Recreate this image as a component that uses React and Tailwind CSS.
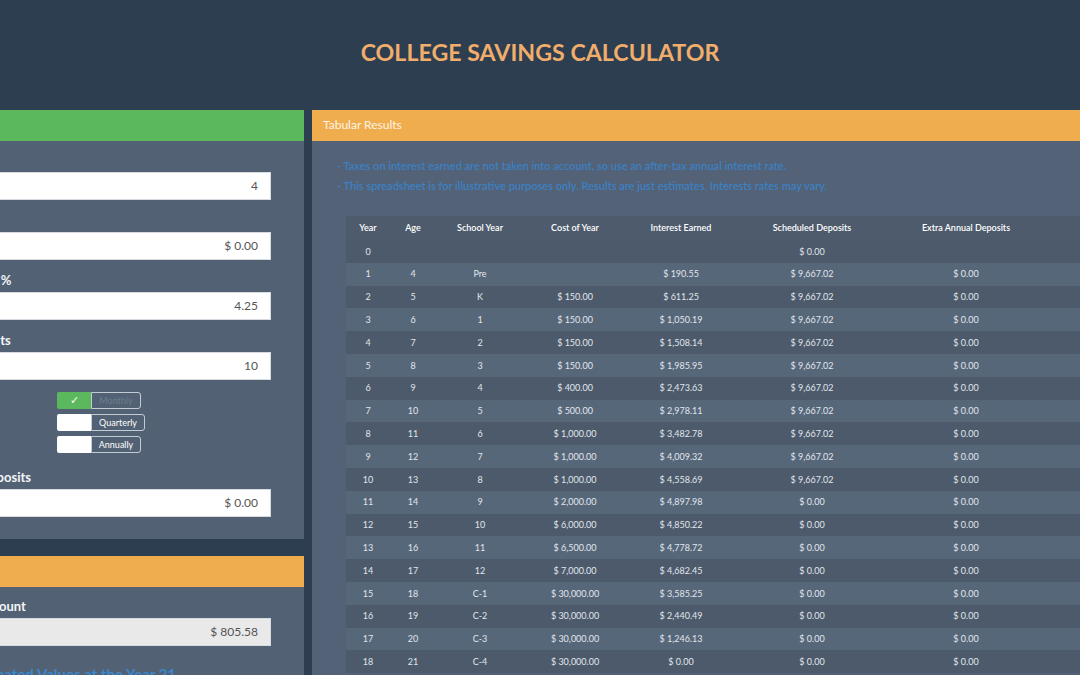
import React from "react";

const rows = [
  ["0", "", "", "", "", "$ 0.00", ""],
  ["1", "4", "Pre", "", "$ 190.55", "$ 9,667.02", "$ 0.00"],
  ["2", "5", "K", "$ 150.00", "$ 611.25", "$ 9,667.02", "$ 0.00"],
  ["3", "6", "1", "$ 150.00", "$ 1,050.19", "$ 9,667.02", "$ 0.00"],
  ["4", "7", "2", "$ 150.00", "$ 1,508.14", "$ 9,667.02", "$ 0.00"],
  ["5", "8", "3", "$ 150.00", "$ 1,985.95", "$ 9,667.02", "$ 0.00"],
  ["6", "9", "4", "$ 400.00", "$ 2,473.63", "$ 9,667.02", "$ 0.00"],
  ["7", "10", "5", "$ 500.00", "$ 2,978.11", "$ 9,667.02", "$ 0.00"],
  ["8", "11", "6", "$ 1,000.00", "$ 3,482.78", "$ 9,667.02", "$ 0.00"],
  ["9", "12", "7", "$ 1,000.00", "$ 4,009.32", "$ 9,667.02", "$ 0.00"],
  ["10", "13", "8", "$ 1,000.00", "$ 4,558.69", "$ 9,667.02", "$ 0.00"],
  ["11", "14", "9", "$ 2,000.00", "$ 4,897.98", "$ 0.00", "$ 0.00"],
  ["12", "15", "10", "$ 6,000.00", "$ 4,850.22", "$ 0.00", "$ 0.00"],
  ["13", "16", "11", "$ 6,500.00", "$ 4,778.72", "$ 0.00", "$ 0.00"],
  ["14", "17", "12", "$ 7,000.00", "$ 4,682.45", "$ 0.00", "$ 0.00"],
  ["15", "18", "C-1", "$ 30,000.00", "$ 3,585.25", "$ 0.00", "$ 0.00"],
  ["16", "19", "C-2", "$ 30,000.00", "$ 2,440.49", "$ 0.00", "$ 0.00"],
  ["17", "20", "C-3", "$ 30,000.00", "$ 1,246.13", "$ 0.00", "$ 0.00"],
  ["18", "21", "C-4", "$ 30,000.00", "$ 0.00", "$ 0.00", "$ 0.00"],
];

const headers = ["Year", "Age", "School Year", "Cost of Year", "Interest Earned", "Scheduled Deposits", "Extra Annual Deposits", "Balance"];
const colW = ["w-[44px]", "w-[46px]", "w-[88px]", "w-[102px]", "w-[110px]", "w-[152px]", "w-[156px]", "w-[120px]"];

function Field({ label, value, readOnly }) {
  return (
    <div className="flex flex-col">
      <label className="h-[17px] text-[13px] font-bold text-[#f3f5f7] leading-[17px] whitespace-nowrap">{label}</label>
      <div
        className={`mt-[3px] h-[28px] border border-[#d5dbe1] px-[12px] flex items-center justify-end text-[12px] text-[#555] ${
          readOnly ? "bg-[#e9e9e9]" : "bg-white"
        }`}
      >
        {value}
      </div>
    </div>
  );
}

function Toggle({ label, checked, w }) {
  return (
    <div className="flex h-[17px]">
      <div
        className={`w-[34px] flex items-center justify-center rounded-l-[2px] text-white text-[11px] ${
          checked ? "bg-[#5cb85c]" : "bg-white"
        }`}
      >
        {checked ? "✓" : ""}
      </div>
      <div
        className={`${w} flex items-center justify-center border border-[#c3cbd4] rounded-r-[3px] text-[9px] ${
          checked ? "text-[#6e7d8d]" : "text-white"
        }`}
      >
        {label}
      </div>
    </div>
  );
}

export default function App() {
  return (
    <div
      className="w-[1080px] h-[675px] overflow-hidden bg-[#2c3e50]"
      style={{ fontFamily: "Lato, 'Open Sans', sans-serif" }}
    >
      <div className="h-[110px] flex items-center justify-center pb-[5px]">
        <h1 className="text-[23.2px] font-bold text-[#f0ad6b]">COLLEGE SAVINGS CALCULATOR</h1>
      </div>

      <div className="flex gap-[8px] ml-[-156px]">
        {/* left column */}
        <div className="w-[460px] shrink-0 flex flex-col gap-[17px]">
          <div className="bg-[#526174]">
            <div className="h-[31px] bg-[#5cb85c]" />
            <div className="pl-[35px] pr-[33px] pt-[11px] pb-[22px] flex flex-col gap-[12px]">
              <Field label="Child's Age" value="4" />
              <Field label="Current Savings" value="$ 0.00" />
              <Field label="Annual Interest Rate %" value="4.25" />
              <Field label="Years Making Deposits" value="10" />
              <div className="flex">
                <div className="w-[178px] text-[13px] font-bold text-[#f3f5f7] whitespace-nowrap">Deposit Frequency</div>
                <div className="flex flex-col gap-[5px]">
                  <Toggle label="Monthly" checked w="w-[50px]" />
                  <Toggle label="Quarterly" w="w-[54px]" />
                  <Toggle label="Annually" w="w-[50px]" />
                </div>
              </div>
              <div className="pt-[4px]">
                <Field label="Additional Yearly Deposits" value="$ 0.00" />
              </div>
            </div>
          </div>

          <div className="bg-[#526174] h-[200px]">
            <div className="h-[31px] bg-[#f0ad4e]" />
            <div className="pl-[35px] pr-[33px] pt-[11px]">
              <Field label="Monthly Deposit Amount" value="$ 805.58" readOnly />
              <div className="mt-[17px] ml-[88px] text-[15px] font-bold text-[#3a87cc] whitespace-nowrap">
                Estimated Values at the Year 21
              </div>
            </div>
          </div>
        </div>

        {/* right column */}
        <div className="w-[900px] shrink-0 bg-[#536276]">
          <div className="h-[31px] bg-[#f0ad4e] flex items-center px-[11px] pb-[1px] text-[12px] text-[#fdf3e4]">
            Tabular Results
          </div>
          <div className="pt-[15px] pl-[25px]">
            <p className="text-[11px] font-semibold text-[#3c80c4] leading-[20px]">
              - Taxes on interest earned are not taken into account, so use an after-tax annual interest rate.
            </p>
            <p className="text-[11px] font-semibold text-[#3c80c4] leading-[20px]">
              - This spreadsheet is for illustrative purposes only. Results are just estimates. Interests rates may vary.
            </p>
            <div className="mt-[20px] ml-[9px]">
              <table className="table-fixed border-collapse text-[9px] text-[#e1e6ec]">
                <colgroup>
                  {colW.map((w, i) => (
                    <col key={i} className={w} />
                  ))}
                </colgroup>
                <thead>
                  <tr className="bg-[#4d5b6c]">
                    {headers.map((h) => (
                      <th key={h} className="h-[24px] font-semibold text-white text-center">
                        {h}
                      </th>
                    ))}
                  </tr>
                </thead>
                <tbody>
                  {rows.map((r, i) => (
                    <tr key={i} className={i % 2 === 0 ? "bg-[#4c5a6b]" : "bg-[#57677a]"}>
                      {r.map((c, j) => (
                        <td key={j} className="h-[22.8px] text-center">
                          {c}
                        </td>
                      ))}
                      <td className="h-[22.8px]" />
                    </tr>
                  ))}
                </tbody>
              </table>
            </div>
          </div>
        </div>
      </div>
    </div>
  );
}
